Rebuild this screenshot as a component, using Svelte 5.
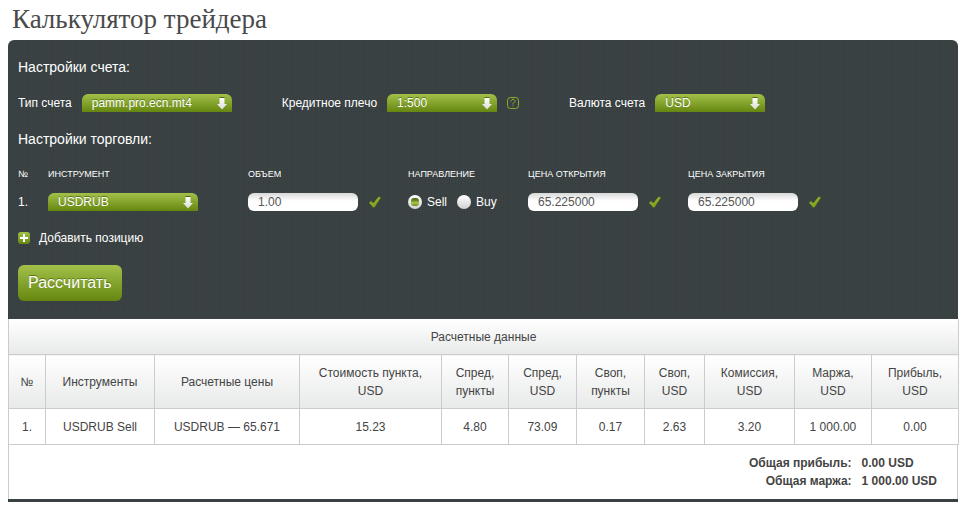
<script>
	let accountType = $state('pamm.pro.ecn.mt4');
	let leverage = $state('1:500');
	let currency = $state('USD');
	let positions = $state([
		{ instrument: 'USDRUB', volume: '1.00', side: 'Sell', open: '65.225000', close: '65.225000' }
	]);

	// Column weights are shares of the full table width
	const columns = [
		{ title: '№', weight: 37 },
		{ title: 'Инструменты', weight: 109 },
		{ title: 'Расчетные цены', weight: 145 },
		{ title: 'Стоимость пункта,', unit: 'USD', weight: 142 },
		{ title: 'Спред,', unit: 'пункты', weight: 67 },
		{ title: 'Спред,', unit: 'USD', weight: 68 },
		{ title: 'Своп,', unit: 'пункты', weight: 68 },
		{ title: 'Своп,', unit: 'USD', weight: 60 },
		{ title: 'Комиссия,', unit: 'USD', weight: 90 },
		{ title: 'Маржа,', unit: 'USD', weight: 77 },
		{ title: 'Прибыль,', unit: 'USD', weight: 87 }
	];
	const total = columns.reduce((sum, c) => sum + c.weight, 0);

	const results = [
		['1.', 'USDRUB Sell', 'USDRUB — 65.671', '15.23', '4.80', '73.09', '0.17', '2.63', '3.20', '1 000.00', '0.00']
	];

	function addPosition() {
		positions.push({ instrument: 'USDRUB', volume: '1.00', side: 'Sell', open: '65.225000', close: '65.225000' });
	}
</script>

{#snippet arrow()}
	<svg class="arrow" width="10" height="13" viewBox="0 0 10 13" aria-hidden="true">
		<defs>
			<linearGradient id="arrow-fill" x1="0" y1="0" x2="0" y2="1">
				<stop offset="0" stop-color="#fff" />
				<stop offset="1" stop-color="#d9dcd6" />
			</linearGradient>
		</defs>
		<path d="M2.500 0h5v1h-5z" fill="#4f6a13" />
		<path d="M2.500 1h5v6H10L5 12.500 0 7h2.500z" fill="url(#arrow-fill)" />
	</svg>
{/snippet}

{#snippet tick()}
	<svg class="tick" width="14" height="14" viewBox="0 0 14 14" aria-hidden="true">
		<path d="M1 7.500 3 6 5.500 8 10.500 1.500 13 2.500 6.500 12.500H5z" fill="#789819" />
		<path d="M2 7.500 5.500 10 11.500 2.500" fill="none" stroke="#8aad27" stroke-width="2" />
	</svg>
{/snippet}

<main>
	<h1>Калькулятор трейдера</h1>

	<form class="panel" onsubmit={(e) => e.preventDefault()}>
		<h2>Настройки счета:</h2>
		<div class="account">
			<div class="field">
				<label for="type">Тип счета</label>
				<span class="select wide">
					<select id="type" bind:value={accountType}>
						<option>pamm.pro.ecn.mt4</option>
					</select>
					{@render arrow()}
				</span>
			</div>
			<div class="field">
				<label for="leverage">Кредитное плечо</label>
				<span class="select">
					<select id="leverage" bind:value={leverage}>
						<option>1:500</option>
					</select>
					{@render arrow()}
				</span>
				<button type="button" class="help" aria-label="Справка">
					<svg width="12" height="12" viewBox="0 0 12 12" fill="none" stroke="#8db02b">
						<rect x="0.500" y="0.500" width="11" height="11" rx="3" />
						<path d="M4 4.500V3.500L5 2.500H7L8 3.500V4.500L6 6.500V7.500M6 8.500V9.500" />
					</svg>
				</button>
			</div>
			<div class="field">
				<label for="currency">Валюта счета</label>
				<span class="select">
					<select id="currency" bind:value={currency}>
						<option>USD</option>
					</select>
					{@render arrow()}
				</span>
			</div>
		</div>

		<h2>Настройки торговли:</h2>
		<table class="trade">
			<thead>
				<tr>
					<th class="c-num">№</th>
					<th class="c-instrument">Инструмент</th>
					<th class="c-value">Объем</th>
					<th class="c-side">Направление</th>
					<th class="c-value">Цена открытия</th>
					<th>Цена закрытия</th>
				</tr>
			</thead>
			<tbody>
				{#each positions as p, i}
					<tr>
						<td>{i + 1}.</td>
						<td>
							<span class="select wide">
								<select aria-label="Инструмент" bind:value={p.instrument}>
									<option>USDRUB</option>
								</select>
								{@render arrow()}
							</span>
						</td>
						<td>
							<div class="entry">
								<input type="text" aria-label="Объем" bind:value={p.volume} />
								{@render tick()}
							</div>
						</td>
						<td>
							<div class="sides">
								<label><input type="radio" name="side-{i}" value="Sell" bind:group={p.side} />Sell</label>
								<label><input type="radio" name="side-{i}" value="Buy" bind:group={p.side} />Buy</label>
							</div>
						</td>
						<td>
							<div class="entry">
								<input type="text" aria-label="Цена открытия" bind:value={p.open} />
								{@render tick()}
							</div>
						</td>
						<td>
							<div class="entry">
								<input type="text" aria-label="Цена закрытия" bind:value={p.close} />
								{@render tick()}
							</div>
						</td>
					</tr>
				{/each}
			</tbody>
		</table>

		<button type="button" class="add" onclick={addPosition}>
			<svg width="12" height="12" viewBox="0 0 12 12" aria-hidden="true">
				<defs>
					<linearGradient id="add-fill" x1="0" y1="0" x2="0" y2="1">
						<stop offset="0" stop-color="#a3c14a" />
						<stop offset="1" stop-color="#65860f" />
					</linearGradient>
				</defs>
				<rect width="12" height="12" rx="3" fill="url(#add-fill)" />
				<path d="M6 2v8M2 6h8" stroke="#fff" stroke-width="2" />
			</svg>
			Добавить позицию
		</button>

		<button type="submit" class="calculate">Рассчитать</button>
	</form>

	<table class="results">
		<colgroup>
			{#each columns as c}
				<col style="width: {(c.weight / total) * 100}%" />
			{/each}
		</colgroup>
		<thead>
			<tr><th colspan={columns.length}>Расчетные данные</th></tr>
			<tr>
				{#each columns as c}
					<th>{c.title}{#if c.unit}<br />{c.unit}{/if}</th>
				{/each}
			</tr>
		</thead>
		<tbody>
			{#each results as row}
				<tr>
					{#each row as cell}
						<td>{cell}</td>
					{/each}
				</tr>
			{/each}
		</tbody>
	</table>

	<dl class="totals">
		<dt>Общая прибыль:</dt>
		<dd>0.00 USD</dd>
		<dt>Общая маржа:</dt>
		<dd>1 000.00 USD</dd>
	</dl>
</main>

<style>
	:global(body) {
		background: #fff;
	}

	main {
		padding: 0 4px 10px 8px;
		font: 12px/18px 'Liberation Sans', Arial, sans-serif;
		color: #444;
	}

	h1 {
		margin: 0;
		padding: 4px 4px 6px;
		font: 27px/30px 'Liberation Serif', Georgia, serif;
		color: #4a4a4a;
	}

	h2 {
		margin: 0;
		font-size: 14px;
		line-height: 18px;
		font-weight: normal;
	}

	.panel,
	.totals {
		--fabric: repeating-linear-gradient(90deg, rgba(0, 0, 0, 0.04) 0 1px, transparent 1px 3px),
			repeating-linear-gradient(0deg, rgba(255, 255, 255, 0.02) 0 1px, transparent 1px 2px), #384041;
	}

	.panel {
		margin-right: 1px;
		padding: 18px 10px;
		border-radius: 6px 6px 0 0;
		background: var(--fabric);
		color: #fff;
	}

	.account {
		display: flex;
		gap: 50px;
		padding: 18px 0;
	}

	.field {
		display: flex;
		align-items: center;
		gap: 10px;
	}

	.select {
		display: block;
		position: relative;
		width: 110px;
	}

	.select.wide {
		width: 150px;
	}

	select {
		display: block;
		appearance: none;
		width: 100%;
		height: 18px;
		padding: 0 24px 0 10px;
		border: 0;
		border-radius: 6px 6px 0 0;
		background: linear-gradient(#a3c14a, #65860f);
		font: inherit;
		color: #fff;
		text-shadow: 0 -1px 0 #5a7716;
	}

	.arrow {
		position: absolute;
		top: 3px;
		right: 5px;
		pointer-events: none;
	}

	.help {
		display: flex;
		padding: 0;
		border: 0;
		background: none;
	}

	.trade {
		width: 100%;
		margin-top: 18px;
		border-collapse: collapse;
		table-layout: fixed;
	}

	.trade th {
		padding: 0 0 10px;
		font-size: 9px;
		line-height: 17px;
		font-weight: normal;
		text-align: left;
		text-transform: uppercase;
	}

	.trade td {
		padding: 0;
	}

	.c-num {
		width: 30px;
	}

	.c-instrument {
		width: 200px;
	}

	.c-value {
		width: 160px;
	}

	.c-side {
		width: 120px;
	}

	.entry {
		display: flex;
		align-items: center;
		gap: 10px;
	}

	.entry input {
		box-sizing: border-box;
		width: 110px;
		height: 18px;
		padding: 0 10px;
		border: 0;
		border-radius: 6px;
		background: linear-gradient(#d8d8d8, #fff 8px);
		font: inherit;
		color: #555;
	}

	.sides {
		display: flex;
		gap: 10px;
	}

	.sides label {
		display: flex;
		align-items: center;
		gap: 5px;
	}

	.sides input {
		display: grid;
		place-items: center;
		appearance: none;
		width: 14px;
		height: 14px;
		margin: 0;
		border-radius: 50%;
		background: linear-gradient(#fff, #d2d2d2);
	}

	.sides input:checked::before {
		content: '';
		width: 8px;
		height: 8px;
		border-radius: 3px;
		background: linear-gradient(#4c6617, #66861b 30%, #a9c64c 60%, #6a8a1c);
	}

	.add {
		display: flex;
		align-items: center;
		gap: 9px;
		margin: 18px 0;
		padding: 0;
		border: 0;
		background: none;
		font: inherit;
		color: #fff;
	}

	.calculate {
		display: block;
		padding: 0 10px;
		border: 0;
		border-radius: 6px;
		background: linear-gradient(#a3c14a, #65860f);
		font: 16px/36px 'Liberation Sans', Arial, sans-serif;
		color: #fff;
		text-shadow: 0 -1px 0 #5a7716;
	}

	.results {
		width: 100%;
		border-collapse: collapse;
		table-layout: fixed;
		text-align: center;
	}

	.results th,
	.results td {
		padding: 9px 0 8px;
		border: 1px solid #ccc;
		font-weight: normal;
	}

	.results th {
		background: linear-gradient(#fff, #e8e9e9);
	}

	.results tr:first-child th {
		border-top: 0;
	}

	.totals {
		display: grid;
		grid-template-columns: 1fr auto;
		gap: 0 10px;
		margin: 0 1px 0 0;
		padding: 9px 20px;
		border: 1px solid #ccc;
		border-width: 0 1px;
		font-weight: bold;
		position: relative;
	}

	.totals::after {
		content: '';
		position: absolute;
		inset: 100% -1px auto;
		height: 3px;
		background: var(--fabric);
	}

	.totals dt {
		text-align: right;
	}

	.totals dd {
		margin: 0;
	}
</style>
